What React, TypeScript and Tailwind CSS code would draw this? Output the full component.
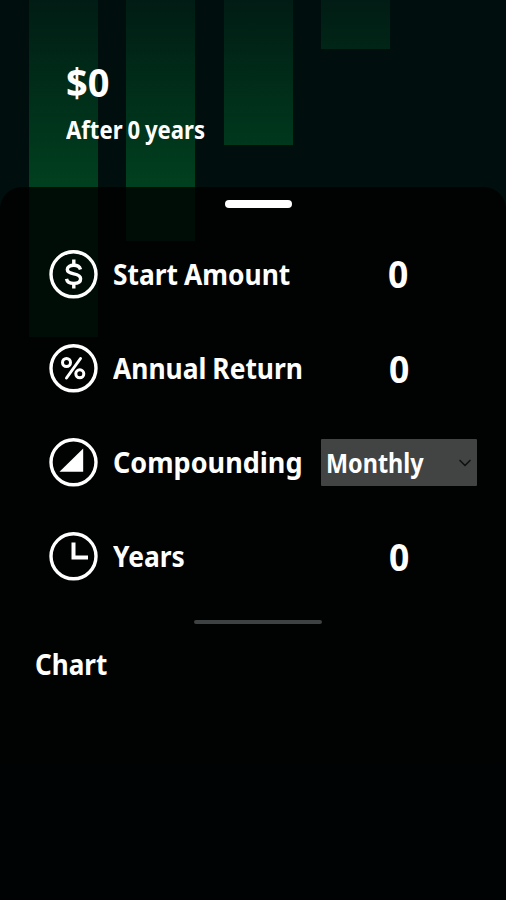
import React, { useState } from "react";
import { FiChevronDown } from "react-icons/fi";

const bars = [
  { id: 1, height: "h-[337px]" },
  { id: 2, height: "h-[241px]" },
  { id: 3, height: "h-[145px]" },
  { id: 4, height: "h-[49px]" },
];

type IconName = "dollar" | "percent" | "compound" | "clock";

function RowIcon({ name }: { name: IconName }) {
  return (
    <svg viewBox="0 0 50 50" className="w-[50px] h-[50px] shrink-0" fill="none" stroke="white">
      <circle cx="25.5" cy="25.3" r="22.5" strokeWidth="3.4" />
      {name === "dollar" ? (
        <g strokeWidth="3.4">
          <path d="M32.5 20.5c-.8-2.8-3.4-4.2-6.7-4.2-3.7 0-6.5 1.7-6.5 4.3 0 2.8 2.7 3.6 6.5 4.3 4 .8 6.8 1.8 6.8 4.9 0 3-2.8 4.6-6.8 4.6-3.9 0-6.7-1.6-7.3-4.6" />
          <path d="M25.8 10.5v5M25.8 34.5v5" />
        </g>
      ) : name === "percent" ? (
        <g strokeWidth="3">
          <circle cx="18.5" cy="19.5" r="4" />
          <circle cx="31.8" cy="30.8" r="4" />
          <path d="M32.5 15.5 18.5 35" strokeLinecap="round" />
        </g>
      ) : name === "compound" ? (
        <path d="M11.5 34.8H35.2V11.5Z" fill="white" stroke="none" />
      ) : (
        <path d="M25.5 11.5V26.5H40" strokeWidth="4" />
      )}
    </svg>
  );
}

function Row({ icon, label, children }: { icon: IconName; label: string; children: React.ReactNode }) {
  return (
    <div className="flex flex-row items-center h-[50px]">
      <RowIcon name={icon} />
      <div className="w-[207px] shrink-0 pl-[15px] -mt-px">
        <p
          className={`w-fit origin-left text-[29px] leading-none whitespace-nowrap [word-spacing:-1px] ${
            icon === "compound" ? "scale-x-[0.932]" : "scale-x-[0.91]"
          }`}
        >
          {label}
        </p>
      </div>
      {children}
    </div>
  );
}

export default function App() {
  const [period] = useState("Monthly");

  return (
    <div className="relative flex flex-col w-full h-[900px] overflow-hidden bg-[#000f0e] text-white font-bold font-['Noto_Sans',sans-serif]">
      <div className="absolute inset-0 flex flex-row items-start gap-[28.3px] pl-[29px]">
        {bars.map((bar) => (
          <div
            key={bar.id}
            className={`w-[69px] shrink-0 bg-[linear-gradient(to_bottom,#011c14_0px,#00401f_187px)] ${bar.height}`}
          />
        ))}
      </div>

      <header className="relative h-[187px] shrink-0 pl-[66px] pt-[62px]">
        <h1 className="w-fit origin-left scale-x-[0.95] text-[40px] leading-[40px]">$0</h1>
        <p className="w-fit origin-left scale-x-[0.885] text-[25px] leading-[28px] mt-[13px] [word-spacing:-1px]">
          After 0 years
        </p>
      </header>

      <main className="relative flex flex-col flex-1 rounded-t-[22px] bg-black/80">
        <div className="w-[67px] h-2 mt-[13px] ml-[225px] rounded-full bg-white" />

        <div className="flex flex-col gap-[44px] mt-[41px] pl-12">
          <Row icon="dollar" label="Start Amount">
            <p className="ml-[83px] -mt-0.5 origin-left scale-x-[0.935] text-[38px] leading-none">0</p>
          </Row>
          <Row icon="percent" label="Annual Return">
            <p className="ml-[84px] origin-left scale-x-[0.935] text-[38px] leading-none">0</p>
          </Row>
          <Row icon="compound" label="Compounding">
            <button className="flex flex-row items-center justify-between w-[156px] h-[47px] ml-4 pl-[5px] pr-0.5 bg-[#424444] rounded-[1px]">
              <span className="mt-0.5 origin-left scale-x-[0.9] text-[26px] leading-none">{period}</span>
              <FiChevronDown className="w-5 h-5 mt-0.5 text-[#111]" />
            </button>
          </Row>
          <Row icon="clock" label="Years">
            <p className="ml-[84px] origin-left scale-x-[0.935] text-[38px] leading-none">0</p>
          </Row>
        </div>

        <div className="w-[128px] h-1 mt-[39px] ml-[194px] rounded-full bg-[#3f4242]" />
        <h2 className="w-fit origin-left scale-x-[0.9] mt-[22px] ml-[35px] text-[29px] leading-[36px]">Chart</h2>
      </main>
    </div>
  );
}
